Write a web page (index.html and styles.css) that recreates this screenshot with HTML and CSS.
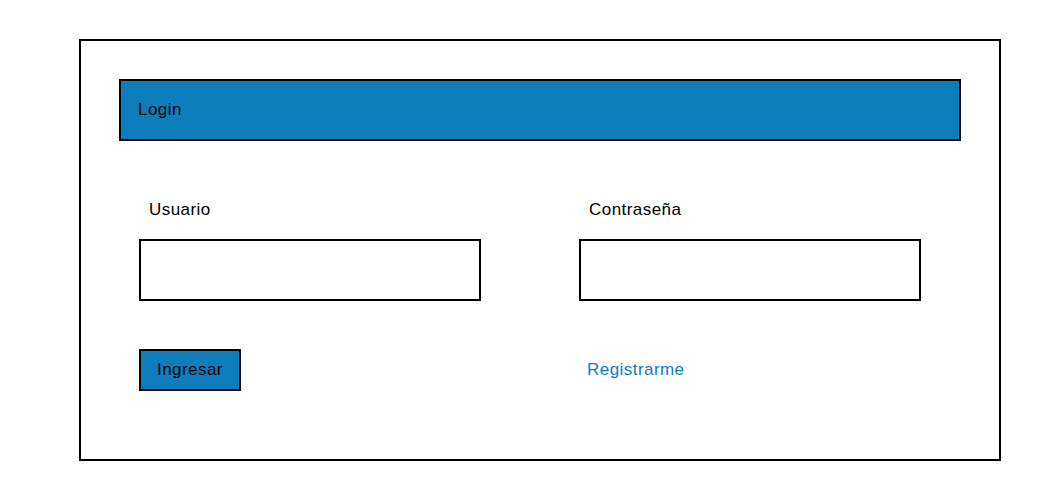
FILE: index.html
```html
<!DOCTYPE html>
<html lang="es">
<head>
<meta charset="utf-8">
<title>Login</title>
<link rel="stylesheet" href="styles.css">
</head>
<body>
<div class="frame">
  <div class="header">Login</div>
  <div class="form">
    <div class="field">
      <label class="label">Usuario</label>
      <div class="input"></div>
    </div>
    <div class="field">
      <label class="label">Contraseña</label>
      <div class="input"></div>
    </div>
    <div class="action">
      <button class="btn">Ingresar</button>
    </div>
    <div class="action">
      <a class="link" href="#">Registrarme</a>
    </div>
  </div>
</div>
</body>
</html>
```

FILE: styles.css
```css
* { box-sizing: border-box; }
html, body { margin: 0; padding: 0; background: #fff; }
body {
  font-family: "Liberation Sans", Arial, sans-serif;
  font-size: 17px;
  letter-spacing: 0.45px;
  color: #000;
}
.frame {
  margin: 39px 0 0 79px;
  width: 922px;
  height: 422px;
  border: 2px solid #000;
  padding: 38px 38px 0 38px;
}
.header {
  height: 62px;
  border: 2px solid #000;
  background: #0e7dbc;
  display: flex;
  align-items: center;
  padding-left: 17px;
  line-height: 20px;
}
.form {
  display: grid;
  grid-template-columns: 342px 342px;
  column-gap: 98px;
  row-gap: 48px;
  padding: 59px 0 0 20px;
}
.field {
  display: flex;
  flex-direction: column;
  gap: 19px;
}
.label {
  line-height: 20px;
  padding-left: 10px;
}
.input {
  height: 62px;
  border: 2px solid #000;
  background: #fff;
}
.action {
  display: flex;
  align-items: center;
  height: 42px;
}
.btn {
  width: 102px;
  height: 42px;
  border: 2px solid #000;
  background: #0e7dbc;
  font: inherit;
  letter-spacing: inherit;
  color: #000;
  padding: 0;
  border-radius: 0;
}
.link {
  color: #0e7dc0;
  text-decoration: none;
  padding-left: 8px;
}
```
